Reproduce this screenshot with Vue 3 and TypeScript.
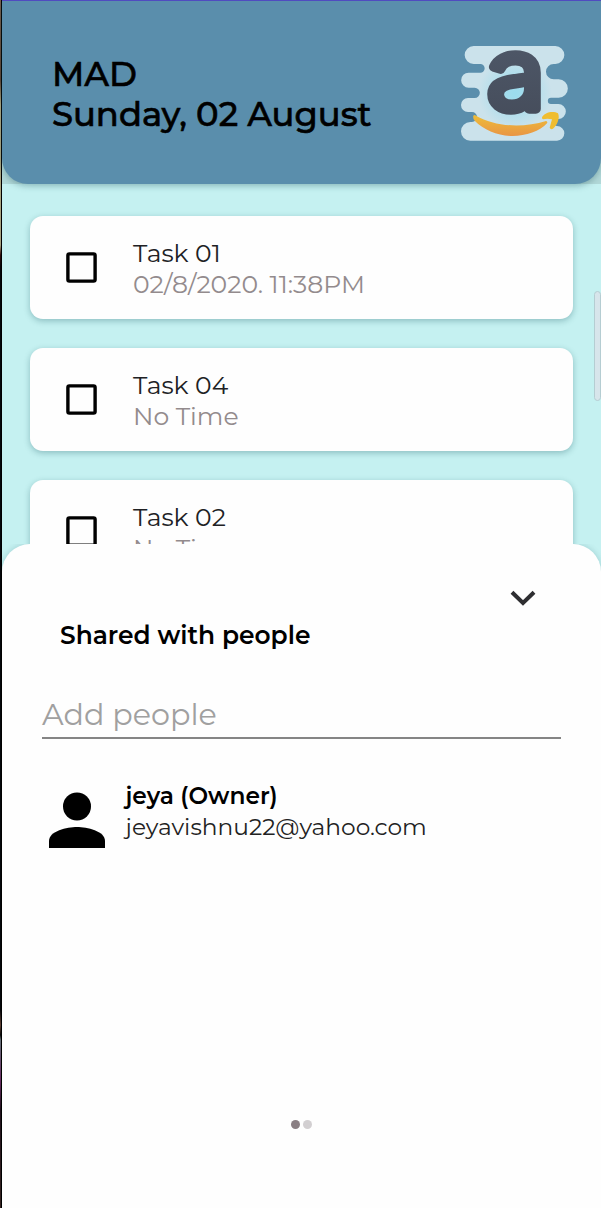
<script setup lang="ts">
interface Task { title: string; time: string }

const tasks: Task[] = [
  { title: 'Task 01', time: '02/8/2020. 11:38PM' },
  { title: 'Task 04', time: 'No Time' },
  { title: 'Task 02', time: 'No Time' },
]
</script>

<template>
  <div class="screen">
    <div class="edge"></div>
    <div class="phone">
      <div class="header-wrap">
        <header class="header">
          <div class="heading">
            <div><span>MAD</span></div>
            <div><span>Sunday, 02 August</span></div>
          </div>
          <svg class="logo" viewBox="60 42 330 294" width="110" height="98">
            <defs>
              <linearGradient id="ink" x1="0" y1="0" x2="0" y2="1">
                <stop offset="0" stop-color="#515b6c" />
                <stop offset="1" stop-color="#444b59" />
              </linearGradient>
              <linearGradient id="smile" x1="0" y1="0" x2="0" y2="1">
                <stop offset="0" stop-color="#edbd38" />
                <stop offset="1" stop-color="#e99545" />
              </linearGradient>
              <radialGradient id="glow" gradientUnits="userSpaceOnUse" cx="225" cy="190" r="110">
                <stop offset="0" stop-color="#9bdcee" />
                <stop offset="0.3" stop-color="#a4dcec" />
                <stop offset="1" stop-color="#cbe2eb" />
              </radialGradient>
            </defs>
            <path
              fill="url(#glow)"
              d="M101 48H346a27 27 0 0 1 0 54H341a23 23 0 0 0 0 46H356a27.500 27.500 0 0 1 0 55H333a9.500 9.500 0 0 0 0 19H355a22.500 22.500 0 0 1 0 45H355a10.500 10.500 0 0 0 -4 21H351a22 22 0 0 1 0 44H91a28 28 0 0 1 0-56H96a15 15 0 0 0 0-30H84a21 21 0 0 1 0-42H104a15.500 15.500 0 0 0 0-31H86a22.500 22.500 0 0 1 0-45H121a13 13 0 0 0 0-26H101a27 27 0 0 1 0-54Z"
            />
            <text class="letter" x="142" y="238" textLength="172" lengthAdjust="spacingAndGlyphs">a</text>
            <path fill="url(#smile)" d="M100 257Q98 265 104 272C132 300 176 318 218 318C257 318 301 303 321 280Q324 274 318 273C250 294 167 291 108 257Q103 253 100 257Z" />
            <path fill="#efbd30" d="M306 262C312 247 340 241 354 250C361 264 351 287 339 296Q332 300 329 293L336 268Q322 264 309 268Q305 267 306 262Z" />
          </svg>
        </header>
      </div>
      <main class="tasks">
        <article v-for="task in tasks" :key="task.title" class="card">
          <svg class="box" width="32" height="32" viewBox="0 0 32 32">
            <rect x="1.900" y="1.900" width="27.200" height="27.200" rx="1.500" fill="none" stroke="#000" stroke-width="3.400" />
          </svg>
          <div class="info">
            <div><span class="title">{{ task.title }}</span></div>
            <div class="time-row"><span class="time">{{ task.time }}</span></div>
          </div>
        </article>
      </main>
      <div class="scrollbar"></div>
      <section class="sheet">
        <div class="collapse">
          <svg width="26" height="16" viewBox="0 0 26 16">
            <path d="M2 2.200L13 13L24 2.200" fill="none" stroke="#2e2e31" stroke-width="4" />
          </svg>
        </div>
        <h2 class="shared"><span>Shared with people</span></h2>
        <div class="field"><span>Add people</span></div>
        <div class="person">
          <svg class="avatar" width="56" height="56" viewBox="0 0 56 56">
            <circle cx="28" cy="14.500" r="14" />
            <path d="M0 56V49C0 39 18 35 28 35S56 39 56 49V56Z" />
          </svg>
          <div class="who">
            <div><span class="owner">jeya (Owner)</span></div>
            <div><span class="mail">jeyavishnu22@yahoo.com</span></div>
          </div>
        </div>
        <div class="dots"><i class="on"></i><i></i></div>
      </section>
    </div>
  </div>
</template>

<style>
body { margin: 0; overflow: hidden; }
</style>

<style scoped>
.screen {
  width: 601px;
  height: 1208px;
  display: flex;
  overflow: hidden;
  font-family: Montserrat, Inter, sans-serif;
  white-space: nowrap;
}
.edge {
  width: 1px;
  flex: none;
  border-right: 1px solid #000;
  background: linear-gradient(#79604e 0, #5e4232 80px, #b2aa82 105px, #a7a382 245px, #320d0d 255px, #05070b 267px, #05070b 1010px, #624236 1025px, #090909 1035px, #657078 1040px, #682d63 1080px, #20111c 1110px, #352320 1208px);
}
.phone {
  position: relative;
  flex: 1;
  background: #c5f1f1;
  display: flex;
  flex-direction: column;
}
.header-wrap { height: 184px; background: #b1d8d8; }
.header {
  height: 184px;
  box-sizing: border-box;
  border-top: 1px solid #504bc0;
  border-radius: 0 0 26px 26px;
  background: #5a8eac;
  box-shadow: 0 2px 6px rgba(30, 80, 90, 0.35);
  display: flex;
  justify-content: space-between;
  padding: 53px 31px 0 50px;
}
.heading {
  font-size: 33.800px;
  line-height: 40px;
  font-weight: 500;
  color: #000;
  -webkit-text-stroke: 0.600px #000;
}
.logo { margin-top: -10px; flex: none; overflow: visible; }
.letter {
  font-family: Inter, sans-serif;
  font-weight: 300;
  font-size: 294px;
  fill: url(#ink);
  stroke: url(#ink);
  stroke-width: 28px;
  stroke-linejoin: round;
}
.tasks {
  height: 360px;
  box-sizing: border-box;
  padding: 32px 28px 0;
  display: flex;
  flex-direction: column;
  gap: 29px;
  overflow: hidden;
}
.card {
  height: 103px;
  flex: none;
  border-radius: 13px;
  background: #fefefe;
  box-shadow: 0 2px 6px rgba(20, 80, 90, 0.32);
  display: flex;
}
.box { margin: 36px 35px 0 36px; flex: none; }
.info { padding-top: 21px; font-size: 25px; line-height: 32px; }
.title { color: #202124; }
.time-row { margin-top: -1px; }
.time { color: #938b8d; font-size: 25.100px; }
.scrollbar {
  position: absolute;
  left: 592px;
  top: 291px;
  width: 5px;
  height: 108px;
  border: 1px solid #b5cdd2;
  border-radius: 4px;
  background: #d7e5eb;
}
.sheet {
  position: relative;
  height: 664px;
  box-sizing: border-box;
  background: #fefefe;
  border-radius: 28px 28px 0 0;
  box-shadow: 0 0 6px rgba(20, 80, 90, 0.22);
  clip-path: inset(0);
}
.collapse { display: flex; justify-content: flex-end; padding: 46px 65px 0 0; height: 16px; }
.shared {
  margin: 13px 0 0 58px;
  font-size: 24.900px;
  line-height: 32px;
  font-weight: 600;
  color: #000;
}
.field {
  margin: 39px 40px 0;
  height: 47px;
  border-bottom: 2px solid #858585;
  font-size: 30.200px;
  line-height: 50px;
  color: #a0a0a0;
}
.person { display: flex; margin: 41px 0 0 47px; }
.avatar { margin-top: 12px; }
.who { margin-left: 20.500px; font-size: 23.300px; line-height: 31px; color: #000; }
.owner { font-weight: 600; }
.mail { color: #222; }
.dots {
  display: flex;
  gap: 3px;
  margin: 271.500px 0 0 289px;
}
.dots i { width: 9px; height: 9px; border-radius: 50%; background: #d2cfd1; }
.dots .on { background: #8a7f83; }
</style>
